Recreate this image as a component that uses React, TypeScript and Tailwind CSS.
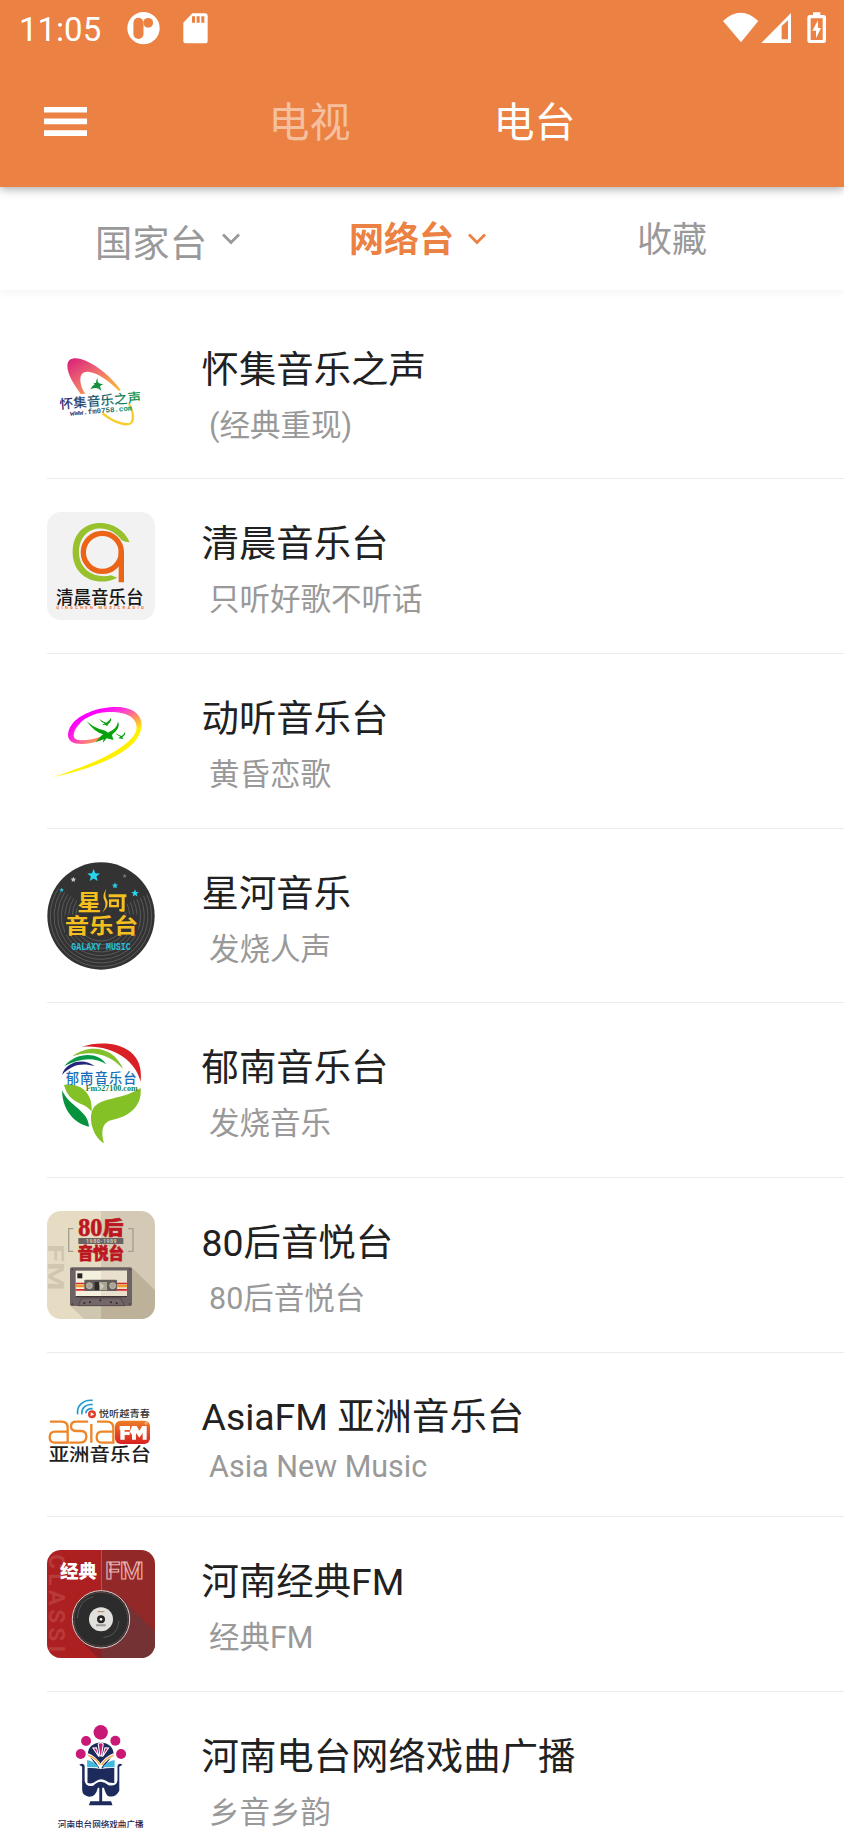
import type { ReactNode } from 'react';

const CJK = "Roboto, 'Noto Sans CJK SC', sans-serif";

function Logo({ box, rounded, stretch, children }: { box: string; rounded?: boolean; stretch?: boolean; children: ReactNode }) {
  return (
    <svg
      viewBox={box}
      preserveAspectRatio={stretch ? 'none' : 'xMidYMid'}
      className={'block h-[108px] w-[108px] shrink-0 ' + (rounded ? 'rounded-[14px]' : '')}
      fontFamily={CJK}
    >
      {children}
    </svg>
  );
}

const huaiji = (
  <Logo box="51 -7 324 324">
    <defs>
      <linearGradient id="h1" x1="0" y1="0" x2="1" y2="1">
        <stop offset="0" stopColor="#d81b7c" />
        <stop offset="0.45" stopColor="#ee6a70" />
        <stop offset="0.75" stopColor="#f5a04a" />
        <stop offset="1" stopColor="#f8c020" />
      </linearGradient>
      <linearGradient id="h2" x1="0" y1="0" x2="1" y2="0">
        <stop offset="0" stopColor="#2b2268" />
        <stop offset="0.5" stopColor="#1d6272" />
        <stop offset="1" stopColor="#12963f" />
      </linearGradient>
    </defs>
    <path
      d="M152 161C131 131 111 101 112 74C114 48 144 50 169 62C208 80 244 111 272 149L267 152C239 124 204 96 174 94C153 93 149 109 152 128C154 142 160 151 166 160Z"
      fill="url(#h1)"
    />
    <path d="M300 190C316 220 320 250 293 255C272 257 241 242 213 220L222 218C247 238 280 252 300 247C309 235 306 212 294 191Z" fill="#f7cf2c" />
    <path d="M204 111Q200 122 206 128Q214 132 222 130Q213 134 210 138L214 152Q207 143 198 143Q189 143 181 147Q186 136 194 132L190 127Q196 128 198 128Q198 118 204 111Z" fill="#14903c" />
    <g transform="rotate(-5 212 180)" fill="url(#h2)">
      <text x="88" y="195" fontSize="39" fontWeight="500" textLength="246" lengthAdjust="spacingAndGlyphs">怀集音乐之声</text>
      <text x="117" y="218" fontSize="22" fontFamily="Liberation Mono, monospace" fontWeight="700" textLength="187" lengthAdjust="spacingAndGlyphs">www.fm0758.com</text>
    </g>
  </Logo>
);

const qingchen = (
  <Logo box="51 37 324 324" rounded>
    <rect x="51" y="37" width="324" height="324" fill="#f2f2f2" />
    <path d="M299 128C268 48 128 44 128 158C128 236 205 264 262 234L243 227C200 238 147 215 147 158C147 76 237 65 275 122Q286 128 299 128Z" fill="#97c22e" />
    <circle cx="217" cy="158" r="57" fill="none" stroke="#eb6418" strokeWidth="16" />
    <path d="M266 154H282V248H266Z" fill="#eb6418" />
    <text x="78" y="312" fontSize="55" fontWeight="500" fill="#171717" textLength="263" lengthAdjust="spacingAndGlyphs">清晨音乐台</text>
    <path d="M202 303L209 309L219 300" fill="none" stroke="#7fb441" strokeWidth="2" />
    <text x="79" y="329" fontSize="12" fontWeight="700" fill="#ed6b2a" textLength="262">QINGCHEN MUSICRADIO</text>
  </Logo>
);

const dongting = (
  <Logo box="51 -9 324 324">
    <defs>
      <linearGradient id="d1" gradientUnits="userSpaceOnUse" x1="180" y1="60" x2="250" y2="200">
        <stop offset="0.1" stopColor="#ff00ff" />
        <stop offset="0.3" stopColor="#ff40d0" />
        <stop offset="0.55" stopColor="#ffa050" />
        <stop offset="0.75" stopColor="#fff000" />
      </linearGradient>
      <linearGradient id="d2" gradientUnits="userSpaceOnUse" x1="118" y1="120" x2="175" y2="160">
        <stop offset="0" stopColor="#ff00ff" />
        <stop offset="1" stopColor="#ff8a65" />
      </linearGradient>
    </defs>
    <path d="M125 105C145 75 196 54 249 51C301 48 335 69 335 105C333 162 264 202 174 233Q126 249 69 262Q105 249 157 230C244 196 318 152 320 113C320 77 277 63 226 67C190 70 155 87 140 112Z" fill="url(#d1)" />
    <path d="M114 132Q116 110 138 90L150 100Q131 120 131 137C132 157 174 154 220 137L217 149C164 168 112 169 114 132Z" fill="url(#d2)" />
    <g fill="#08a20b">
      <path d="M170 94Q186 109 208 117Q226 121 234 128Q262 117 264 94Q273 115 246 134L250 150L230 145L218 159L221 148L206 153L197 157L210 141L219 133Q193 126 170 94Z" />
      <path d="M207 86Q222 96 229 98Q240 91 243 83Q246 91 236 101L231 109L226 104L216 106L224 100Q213 96 207 86Z" />
      <path d="M256 129Q268 136 275 138Q283 132 285 125Q288 135 277 141L280 147L265 145L271 140Q262 137 256 129Z" />
    </g>
  </Logo>
);

const STAR = '0,-10 2.6,-3.5 9.5,-3.1 4.2,1.3 5.9,8.1 0,4.4 -5.9,8.1 -4.2,1.3 -9.5,-3.1 -2.6,-3.5';
const stars = [
  { x: 191, y: 76, s: 2, c: '#2bd5ee' },
  { x: 130, y: 88, s: 0.9, c: '#c9c9cd' },
  { x: 95, y: 119, s: 0.75, c: '#28cde5' },
  { x: 255, y: 106, s: 1, c: '#28cde5' },
  { x: 315, y: 129, s: 1.2, c: '#28d5ed' },
  { x: 284, y: 77, s: 0.7, c: '#777779' },
];

const xinghe = (
  <Logo box="51 35 324 324">
    <circle cx="213" cy="197" r="161" fill="#333334" />
    {[75, 86, 97, 108, 119, 130, 141, 152].map((r) => (
      <circle
        key={r}
        cx="213"
        cy="197"
        r={r}
        fill="none"
        stroke="#6e6e70"
        strokeWidth="1.8"
        pathLength="100"
        strokeDasharray="66 34"
        transform="rotate(-25 213 197)"
      />
    ))}
    {stars.map((s) => (
      <polygon key={s.x} points={STAR} fill={s.c} transform={`translate(${s.x} ${s.y}) scale(${s.s})`} />
    ))}
    <path d="M143 127H289V186H143Z M105 193H325V253H105Z" fill="#333334" />
    <g fill="#f5bf20" fontWeight="700">
      <text x="142" y="180" fontSize="65" textLength="72" lengthAdjust="spacingAndGlyphs">星</text>
      <path d="M229 115Q214 137 224 151Q232 165 216 188Q242 164 229 145Q223 133 229 115Z" />
      <path d="M236 132H289V141H284V181Q283 186 275 184L268 183V176H275V141H236ZM237 147H267V171H237ZM244 154V164H260V154Z" fillRule="evenodd" />
      <text x="104" y="247" fontSize="63" textLength="221" lengthAdjust="spacingAndGlyphs">音乐台</text>
    </g>
    <text x="124" y="300" fontSize="30" fontWeight="700" fontFamily="Liberation Mono, monospace" fill="#25c4da" textLength="178" lengthAdjust="spacingAndGlyphs">GALAXY MUSIC</text>
  </Logo>
);

const yunan = (
  <Logo box="51 19 324 324">
    <path d="M154 51C230 27 345 42 332 156C317 94 250 44 154 51Z" fill="#d92027" />
    <path d="M127 80C177 42 251 49 280 119C246 78 190 57 127 80Z" fill="#84bf2c" />
    <path d="M103 109C137 70 201 63 229 104C191 80 150 86 103 109Z" fill="#069747" />
    <path d="M96 136C108 94 164 84 194 110C157 99 126 104 96 136Z" fill="#24247f" />
    <path d="M102 166C144 158 189 183 185 246C165 215 119 228 102 166Z M332 175C337 235 292 261 246 271C213 279 214 309 222 341C193 326 171 269 190 236C211 202 278 211 332 175Z" fill="#84c126" />
    <path d="M96 182C98 257 149 286 177 291C175 242 117 230 96 182Z" fill="#07923e" />
    <text x="107" y="161" fontSize="40" fontWeight="500" fill="#1670ba" textLength="213" lengthAdjust="spacing">郁南音乐台</text>
    <text x="167" y="183" fontSize="23" fontWeight="700" fontFamily="Liberation Serif, serif" fill="#168241" textLength="156" lengthAdjust="spacingAndGlyphs">Fm527100.com</text>
  </Logo>
);

const eighties = (
  <Logo box="51 33 324 324" rounded>
    <path d="M51 33H213V357H51Z" fill="#e5dcc3" />
    <path d="M213 33H375V357H213Z" fill="#d3c9b4" />
    <path d="M306 203L375 271V357H170L122 318Z" fill="#bdb299" />
    <path d="M122 318H213V357H162Z" fill="#cfc6b0" />
    <text transform="translate(53 132) rotate(90)" fontSize="66" fontWeight="700" fill="#d0c7b1" textLength="140" lengthAdjust="spacingAndGlyphs">FM</text>
    <path d="M130 86H116V154H130M294 86H309V154H294" fill="none" stroke="#a69e90" strokeWidth="4" />
    <g fill="#bc1720" stroke="#bc1720" strokeWidth="2">
      <text x="145" y="107" fontSize="74" fontWeight="900" fontFamily="Liberation Serif, serif" textLength="72" lengthAdjust="spacingAndGlyphs">80</text>
      <text x="218" y="104" fontSize="58" fontWeight="900" textLength="62" lengthAdjust="spacingAndGlyphs">后</text>
      <text x="143" y="178" fontSize="48" fontWeight="900" textLength="139" lengthAdjust="spacingAndGlyphs">音悦台</text>
    </g>
    <rect x="145" y="114" width="135" height="18" fill="#6c6463" />
    <text x="168" y="129" fontSize="16" fontWeight="700" fill="#d2c9b7" textLength="92">1980-1989</text>
    <rect x="120" y="202" width="186" height="116" rx="5" fill="#6d6263" />
    <rect x="137" y="212" width="154" height="78" fill="#f5f0dd" />
    <path d="M213 212H291V290H213Z" fill="#e8e0cc" />
    <path d="M137 248H291V253H137Z M137 267H291V272H137Z" fill="#d3282c" />
    <path d="M137 254H291V262H137Z" fill="#f29a29" />
    <path d="M137 290H291" stroke="#3e3436" strokeWidth="4" />
    <rect x="142" y="220" width="15" height="15" fill="#282428" />
    <rect x="163" y="239" width="98" height="34" rx="3" fill="#645b5b" />
    <rect x="193" y="246" width="38" height="25" fill="#aaa595" />
    <rect x="193" y="246" width="15" height="25" fill="#2d2929" />
    <path d="M208 246L223 258L211 271Z" fill="#d0c9b8" />
    <g fill="#aaa397" stroke="#d5ceb9" strokeWidth="2">
      <circle cx="178" cy="257" r="9" />
      <circle cx="248" cy="257" r="9" />
    </g>
    <path d="M145 317L154 294H272L283 317Z" fill="#736768" stroke="#463b3e" strokeWidth="2" />
    <g fill="#2e282b">
      <circle cx="163" cy="309" r="3" />
      <circle cx="180" cy="307" r="3" />
      <circle cx="211" cy="301" r="3" />
      <circle cx="243" cy="307" r="3" />
      <circle cx="260" cy="310" r="3" />
      <circle cx="127" cy="208" r="2" />
      <circle cx="300" cy="208" r="2" />
      <circle cx="127" cy="312" r="2" />
      <circle cx="299" cy="312" r="2" />
    </g>
  </Logo>
);

const asia = (
  <Logo box="51 2 324 324">
    <defs>
      <linearGradient id="a1" x1="0" y1="0" x2="0" y2="1">
        <stop offset="0" stopColor="#ed7d24" />
        <stop offset="1" stopColor="#d91f23" />
      </linearGradient>
    </defs>
    <g fill="none" stroke="#1f9ccb" strokeWidth="5">
      <path d="M143 102C139 78 159 57 188 60" />
      <path d="M156 102C153 84 167 70 188 73" />
      <path d="M168 99C166 91 177 83 188 85" />
    </g>
    <circle cx="186" cy="102" r="12" fill="#e33c28" />
    <path d="M182 96L193 102L182 108Z" fill="#fff" />
    <text x="206" y="109" fontSize="27" fontWeight="500" fill="#333" textLength="154" lengthAdjust="spacingAndGlyphs">悦听越青春</text>
    <g fill="none" stroke="#ee8629" strokeWidth="7">
      <path d="M60 124H94Q113 124 113 142V187H74Q59 187 59 171Q59 154 75 154H113" />
      <path d="M174 124H138Q123 124 123 138Q123 152 138 152H153Q169 152 169 168Q169 187 150 187H118" />
      <path d="M184 131V187M201 124H230Q250 124 250 143V187H215Q200 187 200 171Q200 154 215 154H250" />
    </g>
    <rect x="255" y="121" width="105" height="70" rx="17" fill="url(#a1)" />
    <path d="M269 137H300V149H284V154H299V164H284V178H271V149H269ZM306 137H320L328 151L337 137H350V178H338V158L328 172L318 158V178H306V163L299 154Z" fill="#fff" />
    <circle cx="348" cy="129" r="3" fill="none" stroke="#fff" strokeWidth="1.5" />
    <text x="56" y="243" fontSize="54" fontWeight="500" fill="#1d1d1d" textLength="307" lengthAdjust="spacingAndGlyphs">亚洲音乐台</text>
  </Logo>
);

const classic = (
  <Logo box="51 31 324 324" rounded>
    <path d="M51 31H214V355H51Z" fill="#ad2022" />
    <path d="M214 31H375V355H214Z" fill="#922827" />
    <path d="M276 177L375 276V355H204L151 302Z" fill="#753234" />
    <path d="M151 302L214 325V355H204Z" fill="#8b1f21" />
    <text transform="translate(57 44) rotate(90)" fontSize="68" fontWeight="700" fill="#b83a39" textLength="350" lengthAdjust="spacing">CLASSIC</text>
    <text x="90" y="114" fontSize="55" fontWeight="900" fill="#fff" textLength="111" lengthAdjust="spacingAndGlyphs">经典</text>
    <path d="M214 55V124" stroke="#c15452" strokeWidth="2" />
    <text x="226" y="119" fontSize="70" fontWeight="700" fill="#982b2b" stroke="#e5b5b2" strokeWidth="3" textLength="115" lengthAdjust="spacingAndGlyphs">FM</text>
    <circle cx="213" cy="239" r="86" fill="#2c2c2c" stroke="#ddd0ce" strokeWidth="3" />
    <circle cx="213" cy="239" r="81" fill="none" stroke="#5b4746" strokeWidth="3" />
    <path d="M142 235Q145 181 190 171M267 243Q265 288 220 294" fill="none" stroke="#555" strokeWidth="3" />
    <circle cx="213" cy="239" r="36" fill="#e1e0dc" />
    <circle cx="213" cy="239" r="12" fill="#252525" />
    <circle cx="213" cy="239" r="4" fill="#fff" />
    <path d="M203 216H223" stroke="#ae8661" strokeWidth="3" />
    <path d="M198 257H227" stroke="#999" strokeWidth="6" />
  </Logo>
);

const opera = (
  <Logo box="47.6 75 302.4 324" stretch>
    <g fill="#ca1877">
      <ellipse cx="198" cy="97" rx="20" ry="22" />
      <ellipse cx="157" cy="123" rx="14" ry="15" />
      <ellipse cx="239" cy="122" rx="14" ry="15" />
      <ellipse cx="142" cy="162" rx="14" ry="15" />
      <ellipse cx="255" cy="162" rx="14" ry="15" />
    </g>
    <path d="M162 163C162 116 234 116 234 163L204 205H192Z" fill="#1c2a5c" />
    <path d="M191 132Q198 125 205 132L200 168H196ZM176 144L186 143L193 170ZM220 144L210 143L203 170Z" fill="#ca1877" stroke="#fff" strokeWidth="3" />
    <path d="M162 164Q185 174 197 200Q211 174 235 164" fill="none" stroke="#fff" strokeWidth="9" />
    <path d="M163 166Q187 175 196 195M234 166Q210 175 201 195" fill="none" stroke="#f4a847" strokeWidth="4" />
    <path d="M160 180Q181 184 192 202H160ZM237 180Q214 184 204 202H237Z" fill="#42b8df" />
    <path d="M138 194Q149 187 153 197V242Q156 261 177 257Q198 234 220 256Q243 260 245 241V197Q249 187 259 194L250 200V272Q239 295 218 288Q212 282 207 263H202V304H227L231 316H165L169 304H194V263H190Q184 291 165 290Q147 287 146 270V200Z" fill="#1c2a5c" />
    <path d="M161 204Q181 203 198 207Q217 203 236 204V249Q220 250 213 242Q198 232 184 244Q176 253 161 249Z" fill="#1c2a5c" />
    <text x="78" y="384" fontSize="28" fontWeight="500" fill="#1c2452" textLength="240" lengthAdjust="spacingAndGlyphs">河南电台网络戏曲广播</text>
  </Logo>
);

const stations = [
  { title: '怀集音乐之声', sub: '(经典重现)', logo: huaiji },
  { title: '清晨音乐台', sub: '只听好歌不听话', logo: qingchen },
  { title: '动听音乐台', sub: '黄昏恋歌', logo: dongting },
  { title: '星河音乐', sub: '发烧人声', logo: xinghe },
  { title: '郁南音乐台', sub: '发烧音乐', logo: yunan },
  { title: '80后音悦台', sub: '80后音悦台', logo: eighties },
  { title: 'AsiaFM 亚洲音乐台', sub: 'Asia New Music', logo: asia, latin: true },
  { title: '河南经典FM', sub: '经典FM', logo: classic },
  { title: '河南电台网络戏曲广播', sub: '乡音乡韵', logo: opera },
];

function Chevron() {
  return (
    <svg viewBox="0 0 18 12" className="h-3 w-[18px]" fill="none" stroke="currentColor" strokeWidth="2.8">
      <path d="M1 1.5L9 9.5L17 1.5" />
    </svg>
  );
}

function StatusBar() {
  return (
    <div className="flex h-14 items-center pl-[19px] pr-[17px]">
      <span className="w-[108px] pt-[3px] text-[33px] leading-[53px]">11:05</span>
      <svg viewBox="383 36 98 98" className="h-[33px] w-[33px]">
        <circle cx="432" cy="84" r="48" fill="#fff" />
        <rect x="402" y="53" width="30" height="63" rx="15" fill="#eb8142" />
        <circle cx="446" cy="68" r="14.5" fill="#eb8142" />
      </svg>
      <svg viewBox="549 38 75 93" className="ml-[23px] h-[31px] w-[25px]">
        <path d="M577 39H615Q623 39 623 47V121Q623 129 615 129H558Q550 129 550 121V67Z" fill="#fff" />
        <path d="M576 48H585V67H576ZM590 48H599V67H590ZM604 48H613V67H604Z" fill="#eb8142" />
      </svg>
      <svg viewBox="902 36 312 96" className="ml-auto h-8 w-[104px]">
        <g fill="#fff">
          <path d="M902 63Q955 14 1008 63L956 127Z" />
          <path d="M1017 129L1106 39V129ZM1078 118H1097V61L1078 78Z" fillRule="evenodd" />
          <path d="M1172 37H1194V45H1205Q1211 46 1211 52V122Q1211 129 1204 129H1162Q1155 129 1155 122V52Q1155 46 1161 45H1172ZM1165 55V120H1201V55Z" fillRule="evenodd" />
          <path d="M1187 61L1170 92H1181V115L1196 84H1187Z" />
        </g>
      </svg>
    </div>
  );
}

export default function App() {
  return (
    <div className="h-[1828px] w-[844px] overflow-hidden bg-white font-[Roboto,'Noto_Sans_CJK_SC',sans-serif]">
      <header className="relative z-20 h-[187px] bg-[#eb8142] text-white shadow-[0_2px_9px_rgba(0,0,0,0.35)]">
        <StatusBar />
        <div className="flex h-[131px] items-center pl-11">
          <svg viewBox="0 0 43 29" className="h-[29px] w-[43px]" fill="#fff">
            <path d="M0 0H43V5.5H0ZM0 11.5H43V17.2H0ZM0 23.3H43V29H0Z" />
          </svg>
          <nav className="ml-[110px] flex pt-[3px] text-center text-[41px] leading-[60px]">
            <span className="w-[225px] text-white/50">电视</span>
            <span className="w-[225px]">电台</span>
          </nav>
        </div>
      </header>

      <nav className="relative z-10 flex h-[103px] items-center bg-white pl-[42px] text-[35px] leading-[52px] text-[#999] shadow-[0_2px_10px_rgba(0,0,0,0.05)]">
        <div className="flex w-[252px] items-center justify-center gap-[15px] pr-[1px]">
          <span className="pt-[11px] text-[37.3px]">国家台</span>
          <Chevron />
        </div>
        <div className="flex w-[252px] items-center justify-center gap-[14px] pr-[5px] text-[#eb8142]">
          <span className="pt-[5px] font-bold">网络台</span>
          <Chevron />
        </div>
        <div className="flex w-[252px] items-center justify-center pt-[5px]">收藏</div>
      </nav>

      <main className="pt-[14.7px]">
        {stations.map((s) => (
          <div key={s.title} className={s.latin ? 'flex h-[164.6px] pl-[47px]' : 'flex h-[174.7px] pl-[47px]'}>
            <div className="flex w-full items-center border-b-[1.5px] border-[#ebebeb]">
              {s.logo}
              <div className={s.latin ? 'ml-[46.5px] flex flex-col pt-[9px]' : 'ml-[46.5px] flex flex-col pt-[12px]'}>
                <span className="text-[37.4px] leading-[56px] text-[#212121]">{s.title}</span>
                <span className={s.latin ? 'pl-[7.5px] text-[30.5px] leading-[44px] text-[#999]' : 'pl-[7.5px] text-[30.5px] leading-[56px] text-[#999]'}>
                  {s.sub}
                </span>
              </div>
            </div>
          </div>
        ))}
      </main>
    </div>
  );
}
